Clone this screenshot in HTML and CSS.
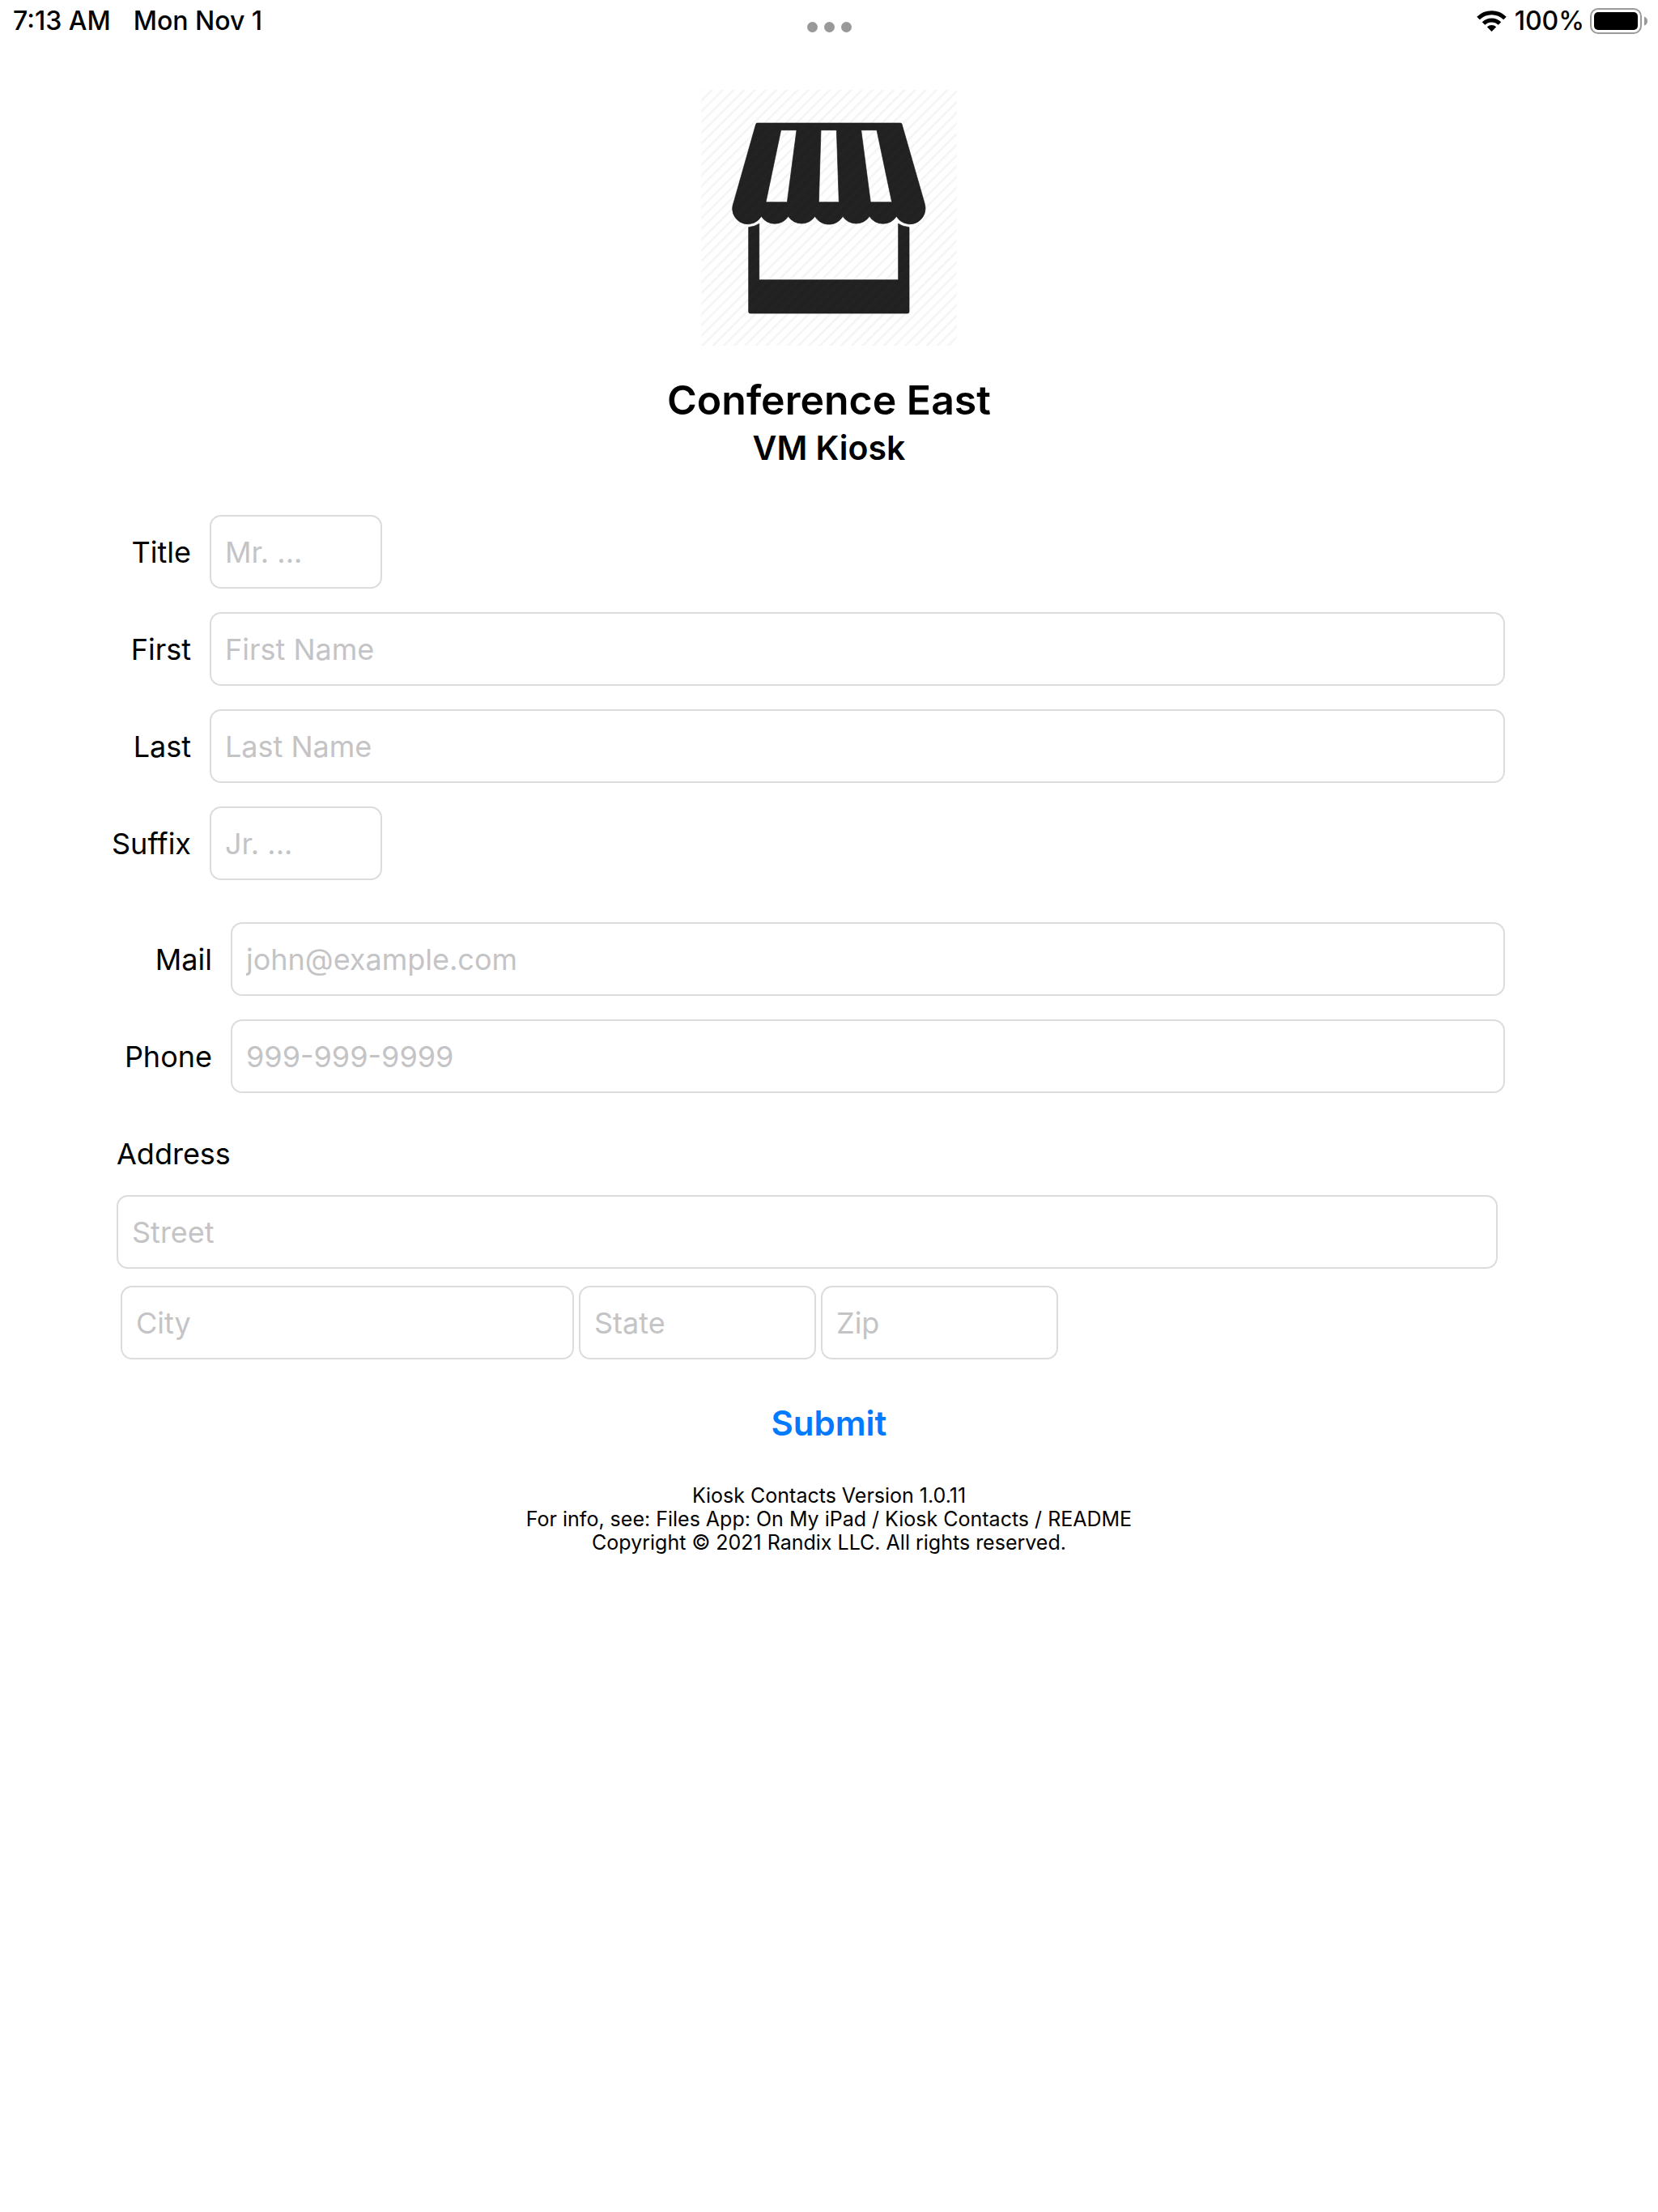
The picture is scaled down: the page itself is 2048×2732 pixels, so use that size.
FILE: index.html
```html
<!DOCTYPE html>
<html lang="en">
<head>
  <meta charset="utf-8">
  <meta name="viewport" content="width=device-width, initial-scale=1">
  <title>Kiosk Contacts</title>
  <link rel="stylesheet" href="styles.css">
</head>
<body>
  <header class="status-bar">
    <div class="status-left">
      <span>7:13 AM</span>
      <span>Mon Nov 1</span>
    </div>
    <div class="status-dots"><i class="dot"></i><i class="dot"></i><i class="dot"></i></div>
    <div class="status-right">
      <svg class="wifi" viewBox="0 0 37 28" aria-hidden="true">
        <g fill="none" stroke="#000" stroke-width="5">
          <path d="M2 10.500A23.500 23.500 0 0 1 35 10.500"/>
          <path d="M8.500 17A14.300 14.300 0 0 1 28.500 17"/>
        </g>
        <path d="M18.500 27L12.800 21.200A8.200 8.200 0 0 1 24.200 21.200Z"/>
      </svg>
      <span class="battery-level">100%</span>
      <svg class="battery" viewBox="0 0 72 32" aria-hidden="true">
        <rect x="1" y="1" width="62" height="30" rx="9" fill="none" stroke="#999" stroke-width="2"/>
        <rect x="5" y="5" width="54" height="22" rx="5"/>
        <path d="M67 10.500Q71 12 71 16T67 21.500Z" fill="#999"/>
      </svg>
    </div>
  </header>

  <main class="page">
    <svg class="logo" viewBox="46 28 954 954" role="img" aria-label="Kiosk">
      <defs>
        <pattern id="hatch" width="28" height="28" patternUnits="userSpaceOnUse" patternTransform="rotate(45)">
          <rect width="8" height="28" fill="#f5f5f5"/>
        </pattern>
        <pattern id="hatch-dark" width="28" height="28" patternUnits="userSpaceOnUse" patternTransform="rotate(45)">
          <rect width="28" height="28" fill="#212121"/>
          <rect width="8" height="28" fill="#232323"/>
        </pattern>
      </defs>
      <rect x="50" y="34" width="946" height="948" fill="url(#hatch)"/>
      <g fill="url(#hatch-dark)" stroke="#151515" stroke-width="2">
        <path fill-rule="evenodd" d="M257 157H788Q792 157 793 161L876 450Q880 463 880 475A57.500 57.500 0 0 1 773 503A60 60 0 0 1 673 503A60 60 0 0 1 574 503A60 60 0 0 1 471 503A60 60 0 0 1 372 503A60 60 0 0 1 272 503A57.500 57.500 0 0 1 165 475Q165 463 170 450L252 161Q253 157 257 157Z
          M345 183L289 450H368L403 183ZM493 183L485 450H560L551 183ZM642 183L677 450H756L700 183Z"/>
        <path d="M225 543Q247 541 264 530V738H780V530Q797 541 820 543V856Q820 862 814 862H231Q225 862 225 856Z"/>
      </g>
    </svg>
    <h1 class="title">Conference East</h1>
    <h2 class="subtitle">VM Kiosk</h2>

    <form class="contact-form">
      <div class="group group-name">
        <label for="title">Title</label>
        <input class="field field-short" id="title" type="text" placeholder="Mr. ...">
        <label for="first">First</label>
        <input class="field" id="first" type="text" placeholder="First Name">
        <label for="last">Last</label>
        <input class="field" id="last" type="text" placeholder="Last Name">
        <label for="suffix">Suffix</label>
        <input class="field field-short" id="suffix" type="text" placeholder="Jr. ...">
      </div>

      <div class="group group-contact">
        <label for="mail">Mail</label>
        <input class="field" id="mail" type="email" placeholder="john@example.com">
        <label for="phone">Phone</label>
        <input class="field" id="phone" type="tel" placeholder="999-999-9999">
      </div>

      <div class="address">
        <label class="address-label" for="street">Address</label>
        <input class="field" id="street" type="text" placeholder="Street">
        <div class="address-row">
          <input class="field" type="text" placeholder="City" aria-label="City">
          <input class="field" type="text" placeholder="State" aria-label="State">
          <input class="field" type="text" placeholder="Zip" aria-label="Zip">
        </div>
      </div>

      <button class="submit" type="submit">Submit</button>
    </form>

    <footer class="about">
      <p>Kiosk Contacts Version 1.0.11</p>
      <p>For info, see: Files App: On My iPad / Kiosk Contacts / README</p>
      <p>Copyright © 2021 Randix LLC. All rights reserved.</p>
    </footer>
  </main>
</body>
</html>
```
FILE: styles.css
```css
* {
  box-sizing: border-box;
}

body {
  margin: 0;
  background: #fff;
  color: #000;
  font-family: Inter, "Liberation Sans", sans-serif;
  font-size: 36px;
  line-height: 46px;
}

.status-bar {
  display: grid;
  grid-template-columns: 1fr auto 1fr;
  align-items: center;
  height: 52px;
  font-size: 32px;
  font-weight: 500;
}

.status-left {
  display: flex;
  gap: 28px;
  padding-left: 16px;
}

.status-dots {
  display: flex;
  gap: 8px;
  padding-top: 14px;
}

.dot {
  width: 13px;
  height: 13px;
  border-radius: 50%;
  background: #999;
}

.status-right {
  display: flex;
  align-items: center;
  justify-content: flex-end;
  padding-right: 12px;
}

.wifi {
  width: 37px;
  height: 28px;
  margin-right: 10px;
}

.battery-level {
  margin-right: 7px;
}

.battery {
  width: 72px;
  height: 32px;
}

.page {
  display: flex;
  flex-direction: column;
  padding-top: 57px;
}

.logo {
  width: 318px;
  height: 318px;
  margin: 0 auto 35px;
}

.title,
.subtitle {
  margin: 0;
  text-align: center;
  font-weight: 600;
}

.title {
  font-size: 50px;
  line-height: 64px;
}

.subtitle {
  font-size: 41px;
  line-height: 54px;
}

.contact-form {
  display: flex;
  flex-direction: column;
  gap: 52px;
  margin-top: 56px;
  padding: 0 189px 0 136px;
}

.group {
  display: grid;
  align-items: center;
  column-gap: 23px;
  row-gap: 29px;
  text-align: right;
}

.group-name {
  grid-template-columns: 100px 1fr;
}

.group-contact {
  grid-template-columns: 126px 1fr;
}

.field {
  width: 100%;
  min-width: 0;
  height: 91px;
  padding: 0 17px;
  border: 2px solid #dcdcdc;
  border-radius: 14px;
  background: #fff;
  color: inherit;
  font: inherit;
}

.field::placeholder {
  color: #c4c4c6;
  opacity: 1;
}

.field-short {
  width: 213px;
}

.address {
  display: flex;
  flex-direction: column;
  margin: 0 9px 0 8px;
}

.address-label {
  margin-bottom: 28px;
}

.address-row {
  display: grid;
  grid-template-columns: 560px 293px 293px;
  gap: 6px;
  margin: 21px 0 0 5px;
}

.submit {
  align-self: center;
  margin-left: 53px;
  padding: 0;
  border: 0;
  background: none;
  color: #007aff;
  font: inherit;
  font-size: 42px;
  font-weight: 600;
  line-height: 54px;
}

.about {
  margin-top: 48px;
  text-align: center;
  font-size: 25px;
  line-height: 29px;
}

.about p {
  margin: 0;
}
```
